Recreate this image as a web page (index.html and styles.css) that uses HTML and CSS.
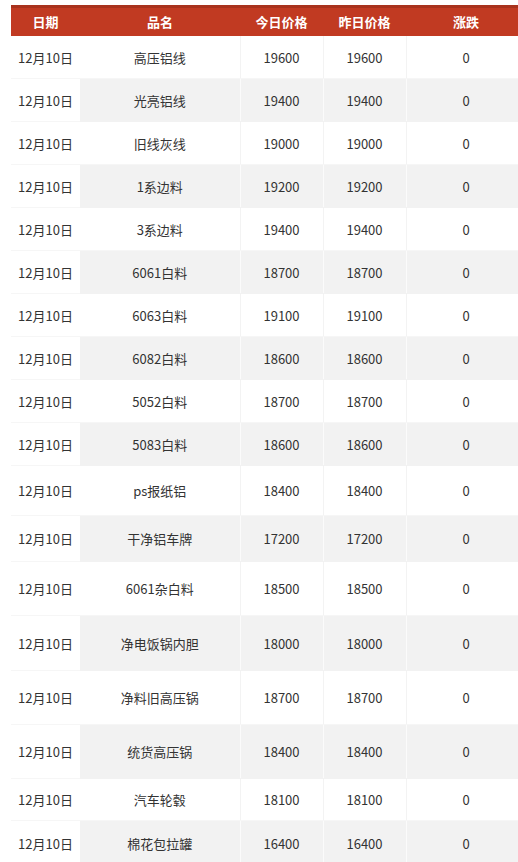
FILE: index.html
```html
<!DOCTYPE html>
<html lang="zh-CN">
<head>
<meta charset="utf-8">
<link rel="stylesheet" href="styles.css">
</head>
<body>
<div class="page">
<table class="price">
<colgroup><col class="c-date"><col class="c-name"><col class="c-num"><col class="c-num"><col class="c-chg"></colgroup>
<thead>
<tr><th>日期</th><th>品名</th><th>今日价格</th><th>昨日价格</th><th>涨跌</th></tr>
</thead>
<tbody>
<tr class="h43"><td>12月10日</td><td>高压铝线</td><td>19600</td><td>19600</td><td>0</td></tr>
<tr class="h43"><td>12月10日</td><td>光亮铝线</td><td>19400</td><td>19400</td><td>0</td></tr>
<tr class="h43"><td>12月10日</td><td>旧线灰线</td><td>19000</td><td>19000</td><td>0</td></tr>
<tr class="h43"><td>12月10日</td><td>1系边料</td><td>19200</td><td>19200</td><td>0</td></tr>
<tr class="h43"><td>12月10日</td><td>3系边料</td><td>19400</td><td>19400</td><td>0</td></tr>
<tr class="h43"><td>12月10日</td><td>6061白料</td><td>18700</td><td>18700</td><td>0</td></tr>
<tr class="h43"><td>12月10日</td><td>6063白料</td><td>19100</td><td>19100</td><td>0</td></tr>
<tr class="h43"><td>12月10日</td><td>6082白料</td><td>18600</td><td>18600</td><td>0</td></tr>
<tr class="h43"><td>12月10日</td><td>5052白料</td><td>18700</td><td>18700</td><td>0</td></tr>
<tr class="h43"><td>12月10日</td><td>5083白料</td><td>18600</td><td>18600</td><td>0</td></tr>
<tr class="h50"><td>12月10日</td><td>ps报纸铝</td><td>18400</td><td>18400</td><td>0</td></tr>
<tr class="h46"><td>12月10日</td><td>干净铝车牌</td><td>17200</td><td>17200</td><td>0</td></tr>
<tr class="h54"><td>12月10日</td><td>6061杂白料</td><td>18500</td><td>18500</td><td>0</td></tr>
<tr class="h55"><td>12月10日</td><td>净电饭锅内胆</td><td>18000</td><td>18000</td><td>0</td></tr>
<tr class="h54"><td>12月10日</td><td>净料旧高压锅</td><td>18700</td><td>18700</td><td>0</td></tr>
<tr class="h54"><td>12月10日</td><td>统货高压锅</td><td>18400</td><td>18400</td><td>0</td></tr>
<tr class="h42"><td>12月10日</td><td>汽车轮毂</td><td>18100</td><td>18100</td><td>0</td></tr>
<tr class="h46"><td>12月10日</td><td>棉花包拉罐</td><td>16400</td><td>16400</td><td>0</td></tr>
</tbody>
</table>
</div>
</body>
</html>
```

FILE: styles.css
```css
html, body {
  margin: 0;
  padding: 0;
  background: #ffffff;
  overflow: hidden;
}
.page {
  padding: 5px 0 0 11px;
  width: 515px;
  box-sizing: content-box;
}
.price {
  border-collapse: collapse;
  table-layout: fixed;
  width: 515px;
  font-family: "Noto Sans CJK SC", "Noto Sans", sans-serif;
  font-size: 13px;
  color: #333333;
}
.c-date { width: 69px; }
.c-name { width: 160px; }
.c-num { width: 83px; }
.c-chg { width: 120px; }
.price thead th {
  background: #c13a22;
  border-top: 3px solid #a8321d;
  color: #ffffff;
  font-weight: 700;
  font-size: 13px;
  height: 28px;
  padding: 0;
  text-align: center;
  vertical-align: middle;
  line-height: 16px;
}
.price td {
  padding: 0;
  text-align: center;
  vertical-align: middle;
  border-right: 1px solid #f3f3f3;
  border-bottom: 1px solid #f6f6f6;
}
.price tbody tr:nth-child(even) td {
  background: #f2f2f2;
  border-right-color: #fbfbfb;
  border-bottom-color: #f2f2f2;
}
.price tbody tr:nth-child(even) td:first-child {
  background: #ffffff;
  border-bottom-color: #f6f6f6;
}
.price td:first-child { border-right: 0; }
.h42 td { height: 41px; }
.h43 td { height: 42px; }
.h46 td { height: 45px; }
.h50 td { height: 49px; }
.h54 td { height: 53px; }
.h55 td { height: 54px; }
```
